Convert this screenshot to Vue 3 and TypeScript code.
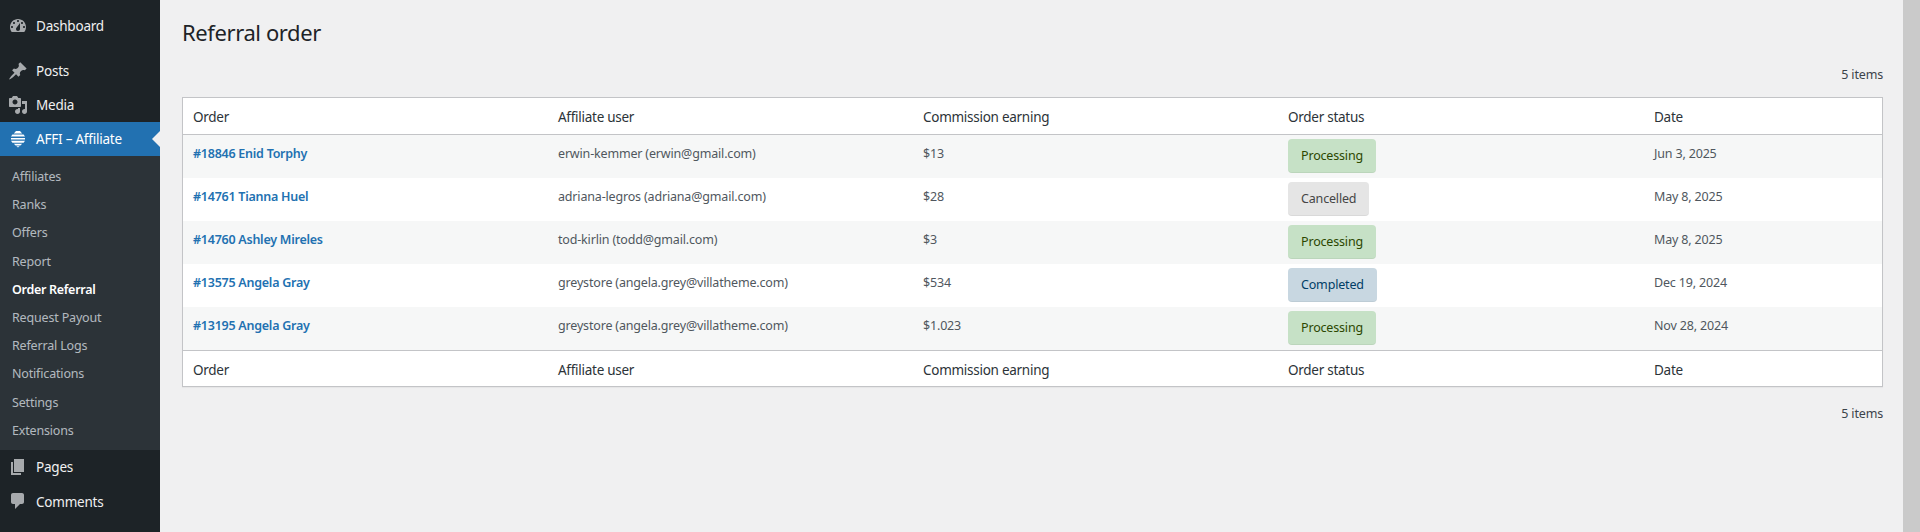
<script setup lang="ts">
interface Row {
  order: string
  user: string
  amount: string
  status: 'Processing' | 'Cancelled' | 'Completed'
  date: string
}

const columns = ['Order', 'Affiliate user', 'Commission earning', 'Order status', 'Date']
const rows: Row[] = [
  { order: '#18846 Enid Torphy', user: 'erwin-kemmer (erwin@gmail.com)', amount: '$13', status: 'Processing', date: 'Jun 3, 2025' },
  { order: '#14761 Tianna Huel', user: 'adriana-legros (adriana@gmail.com)', amount: '$28', status: 'Cancelled', date: 'May 8, 2025' },
  { order: '#14760 Ashley Mireles', user: 'tod-kirlin (todd@gmail.com)', amount: '$3', status: 'Processing', date: 'May 8, 2025' },
  { order: '#13575 Angela Gray', user: 'greystore (angela.grey@villatheme.com)', amount: '$534', status: 'Completed', date: 'Dec 19, 2024' },
  { order: '#13195 Angela Gray', user: 'greystore (angela.grey@villatheme.com)', amount: '$1.023', status: 'Processing', date: 'Nov 28, 2024' },
]
const submenu = ['Affiliates', 'Ranks', 'Offers', 'Report', 'Order Referral', 'Request Payout', 'Referral Logs', 'Notifications', 'Settings', 'Extensions']
</script>

<template>
  <div class="page">
    <aside class="sidebar">
      <a class="item first">
        <svg class="icon" viewBox="0 0 20 20"><path fill-rule="evenodd" d="M3.760 16h12.480c1.100-1.370 1.760-3.110 1.760-5 0-4.420-3.580-8-8-8s-8 3.580-8 8c0 1.890.66 3.630 1.760 5zM10 4c.55 0 1 .45 1 1s-.45 1-1 1-1-.45-1-1 .45-1 1-1zM6 6c.55 0 1 .45 1 1s-.45 1-1 1-1-.45-1-1 .45-1 1-1zm8 0c.55 0 1 .45 1 1s-.45 1-1 1-1-.45-1-1 .45-1 1-1zm-5.370 5.550L12 7v6c0 1.100-.9 2-2 2s-2-.9-2-2c0-.57.24-1.080.63-1.450zM4 10c.55 0 1 .45 1 1s-.45 1-1 1-1-.45-1-1 .45-1 1-1zm12 0c.55 0 1 .45 1 1s-.45 1-1 1-1-.45-1-1 .45-1 1-1z"/></svg>
        <span>Dashboard</span>
      </a>
      <a class="item gap">
        <svg class="icon" viewBox="0 0 20 20"><path d="M10.440 3.020l1.820-1.820 6.360 6.350-1.830 1.820c-1.050-.68-2.480-.57-3.410.36l-.75.75c-.92.93-1.040 2.350-.35 3.410l-1.830 1.820-2.410-2.410-2.800 2.790c-.42.42-3.380 2.710-3.800 2.290s1.860-3.390 2.280-3.810l2.790-2.790L4.100 9.360l1.830-1.820c1.050.69 2.480.57 3.410-.36l.75-.75c.93-.92 1.040-2.350.35-3.410z"/></svg>
        <span>Posts</span>
      </a>
      <a class="item">
        <svg class="icon" viewBox="0 0 20 20"><path fill-rule="evenodd" d="M13 11V4c0-.55-.45-1-1-1h-1.670L9 1H5L3.670 3H2c-.55 0-1 .45-1 1v7c0 .55.45 1 1 1h10c.55 0 1-.45 1-1zM7 4.500c1.380 0 2.500 1.120 2.500 2.500S8.380 9.500 7 9.500 4.500 8.380 4.500 7 5.620 4.500 7 4.500zM14 6h5v10.500c0 1.380-1.120 2.500-2.500 2.500S14 17.880 14 16.500s1.120-2.500 2.500-2.500c.17 0 .34.02.5.05V9h-3V6zm-4 8.050V13h2v3.500c0 1.380-1.120 2.500-2.500 2.500S7 17.880 7 16.500 8.120 14 9.500 14c.17 0 .34.02.5.05z"/></svg>
        <span>Media</span>
      </a>
      <a class="item active">
        <svg class="icon" viewBox="0 0 20 20"><path d="M8 2h4l2.200 2.400H5.800zM4.400 5.400h11.200L17 7.400H3zM3 9h14v1.600H3zM3 11.800h14l-1.400 2H4.400zM5.800 14.800h8.400L12.400 16.600H7.600zM8.400 17.200h3.200L10 18.400z"/></svg>
        <span>AFFI – Affiliate</span>
        <i class="pointer"></i>
      </a>
      <ul class="submenu">
        <li v-for="name in submenu" :key="name" :class="{ current: name === 'Order Referral' }">{{ name }}</li>
      </ul>
      <a class="item">
        <svg class="icon" viewBox="0 0 20 20"><path d="M6 15V2h10v13H6zm-1 1h8v2H3V5h2v11z"/></svg>
        <span>Pages</span>
      </a>
      <a class="item last">
        <svg class="icon" viewBox="0 0 20 20"><path d="M5 2h9c1.100 0 2 .9 2 2v7c0 1.100-.9 2-2 2h-2l-5 5v-5H5c-1.100 0-2-.9-2-2V4c0-1.100.9-2 2-2z"/></svg>
        <span>Comments</span>
      </a>
    </aside>

    <main class="content">
      <h1 class="title">Referral order</h1>
      <div class="count">5 items</div>
      <table class="orders">
        <thead>
          <tr><th v-for="c in columns" :key="c">{{ c }}</th></tr>
        </thead>
        <tbody>
          <tr v-for="r in rows" :key="r.order">
            <td><a class="link">{{ r.order }}</a></td>
            <td>{{ r.user }}</td>
            <td>{{ r.amount }}</td>
            <td><mark class="status" :class="r.status.toLowerCase()">{{ r.status }}</mark></td>
            <td>{{ r.date }}</td>
          </tr>
        </tbody>
        <tfoot>
          <tr><th v-for="c in columns" :key="c">{{ c }}</th></tr>
        </tfoot>
      </table>
      <div class="count bottom">5 items</div>
    </main>

    <div class="scrollbar"></div>
  </div>
</template>

<style>
html, body { margin: 0; height: 100%; overflow: hidden; }
</style>

<style scoped>
.page {
  position: relative;
  display: flex;
  width: 1920px;
  height: 532px;
  overflow: hidden;
  background: #f0f0f1;
  font-family: "Noto Sans", "Open Sans", sans-serif;
  font-size: 12.500px;
  letter-spacing: -0.17px;
  color: #3c434a;
}
.sidebar {
  width: 160px;
  flex: none;
  background: #1d2327;
  padding-top: 9px;
  box-sizing: border-box;
}
.item {
  position: relative;
  display: flex;
  align-items: center;
  height: 34px;
  color: #f0f0f1;
  font-size: 13.500px;
  letter-spacing: -0.22px;
}
.item.gap { margin-top: 11px; }
.item span { margin-left: 36px; }
.item.last span { margin-top: 2px; }
.icon {
  position: absolute;
  left: 8px;
  top: 7px;
  width: 20px;
  height: 20px;
  fill: #a7aaad;
}
.active { background: #2271b1; color: #fff; }
.active .icon { fill: #fff; }
.pointer {
  position: absolute;
  right: 0;
  top: 9px;
  border: 8px solid transparent;
  border-right-color: #f0f0f1;
  border-left: 0;
}
.submenu {
  list-style: none;
  margin: 0;
  padding: 7px 0 5px;
  background: #2c3338;
  color: rgba(240, 246, 252, 0.7);
}
.submenu li {
  height: 28.200px;
  line-height: 28px;
  padding-left: 12px;
}
.submenu .current { color: #fff; font-weight: 600; letter-spacing: -0.3px; }
.content {
  flex: 1;
  min-width: 0;
  padding: 0 37px 0 22px;
}
.title {
  margin: 0;
  padding: 15px 0 0;
  font-size: 22px;
  letter-spacing: -0.4px;
  font-weight: 400;
  line-height: 34px;
  color: #1d2327;
}
.count {
  text-align: right;
  line-height: 20px;
  margin-top: 16px;
  height: 32px;
}
.count.bottom { margin-top: 17px; }
.orders {
  width: 100%;
  table-layout: fixed;
  border-collapse: separate;
  border-spacing: 0;
  background: #fff;
  border: 1px solid #c3c4c7;
  box-shadow: 0 1px 1px rgba(0, 0, 0, 0.04);
}
.orders th {
  padding: 1px 10px 0;
  text-align: left;
  font-weight: 400;
  font-size: 13.500px;
  letter-spacing: -0.27px;
  color: #2c3338;
  box-sizing: border-box;
}
.orders th:nth-child(-n + 3) { width: 365px; }
.orders th:nth-child(4) { width: 366px; }
.orders thead th { border-bottom: 1px solid #c3c4c7; height: 37px; }
.orders tfoot th { border-top: 1px solid #c3c4c7; height: 36px; padding-top: 2px; }
.orders td {
  height: 43px;
  padding: 9px 10px 7px;
  vertical-align: top;
  box-sizing: border-box;
  line-height: 20px;
  color: #50575e;
}
.orders tbody tr:nth-child(odd) td { background: #f6f7f7; }
.link { color: #2271b1; font-weight: 600; letter-spacing: -0.25px; }
.status {
  display: block;
  width: fit-content;
  margin: -5px 0 -6px;
  padding: 1px 13px 0;
  line-height: 32px;
  border-radius: 4px;
  border-bottom: 1px solid rgba(0, 0, 0, 0.05);
  white-space: nowrap;
}
.processing { background: #c6e1c6; color: #2c4700; }
.cancelled { background: #e5e5e5; color: #454545; }
.completed { background: #c8d7e1; color: #003d66; }
.scrollbar {
  position: absolute;
  right: 0;
  top: 0;
  width: 17px;
  height: 532px;
  background: #cacaca;
}
</style>
